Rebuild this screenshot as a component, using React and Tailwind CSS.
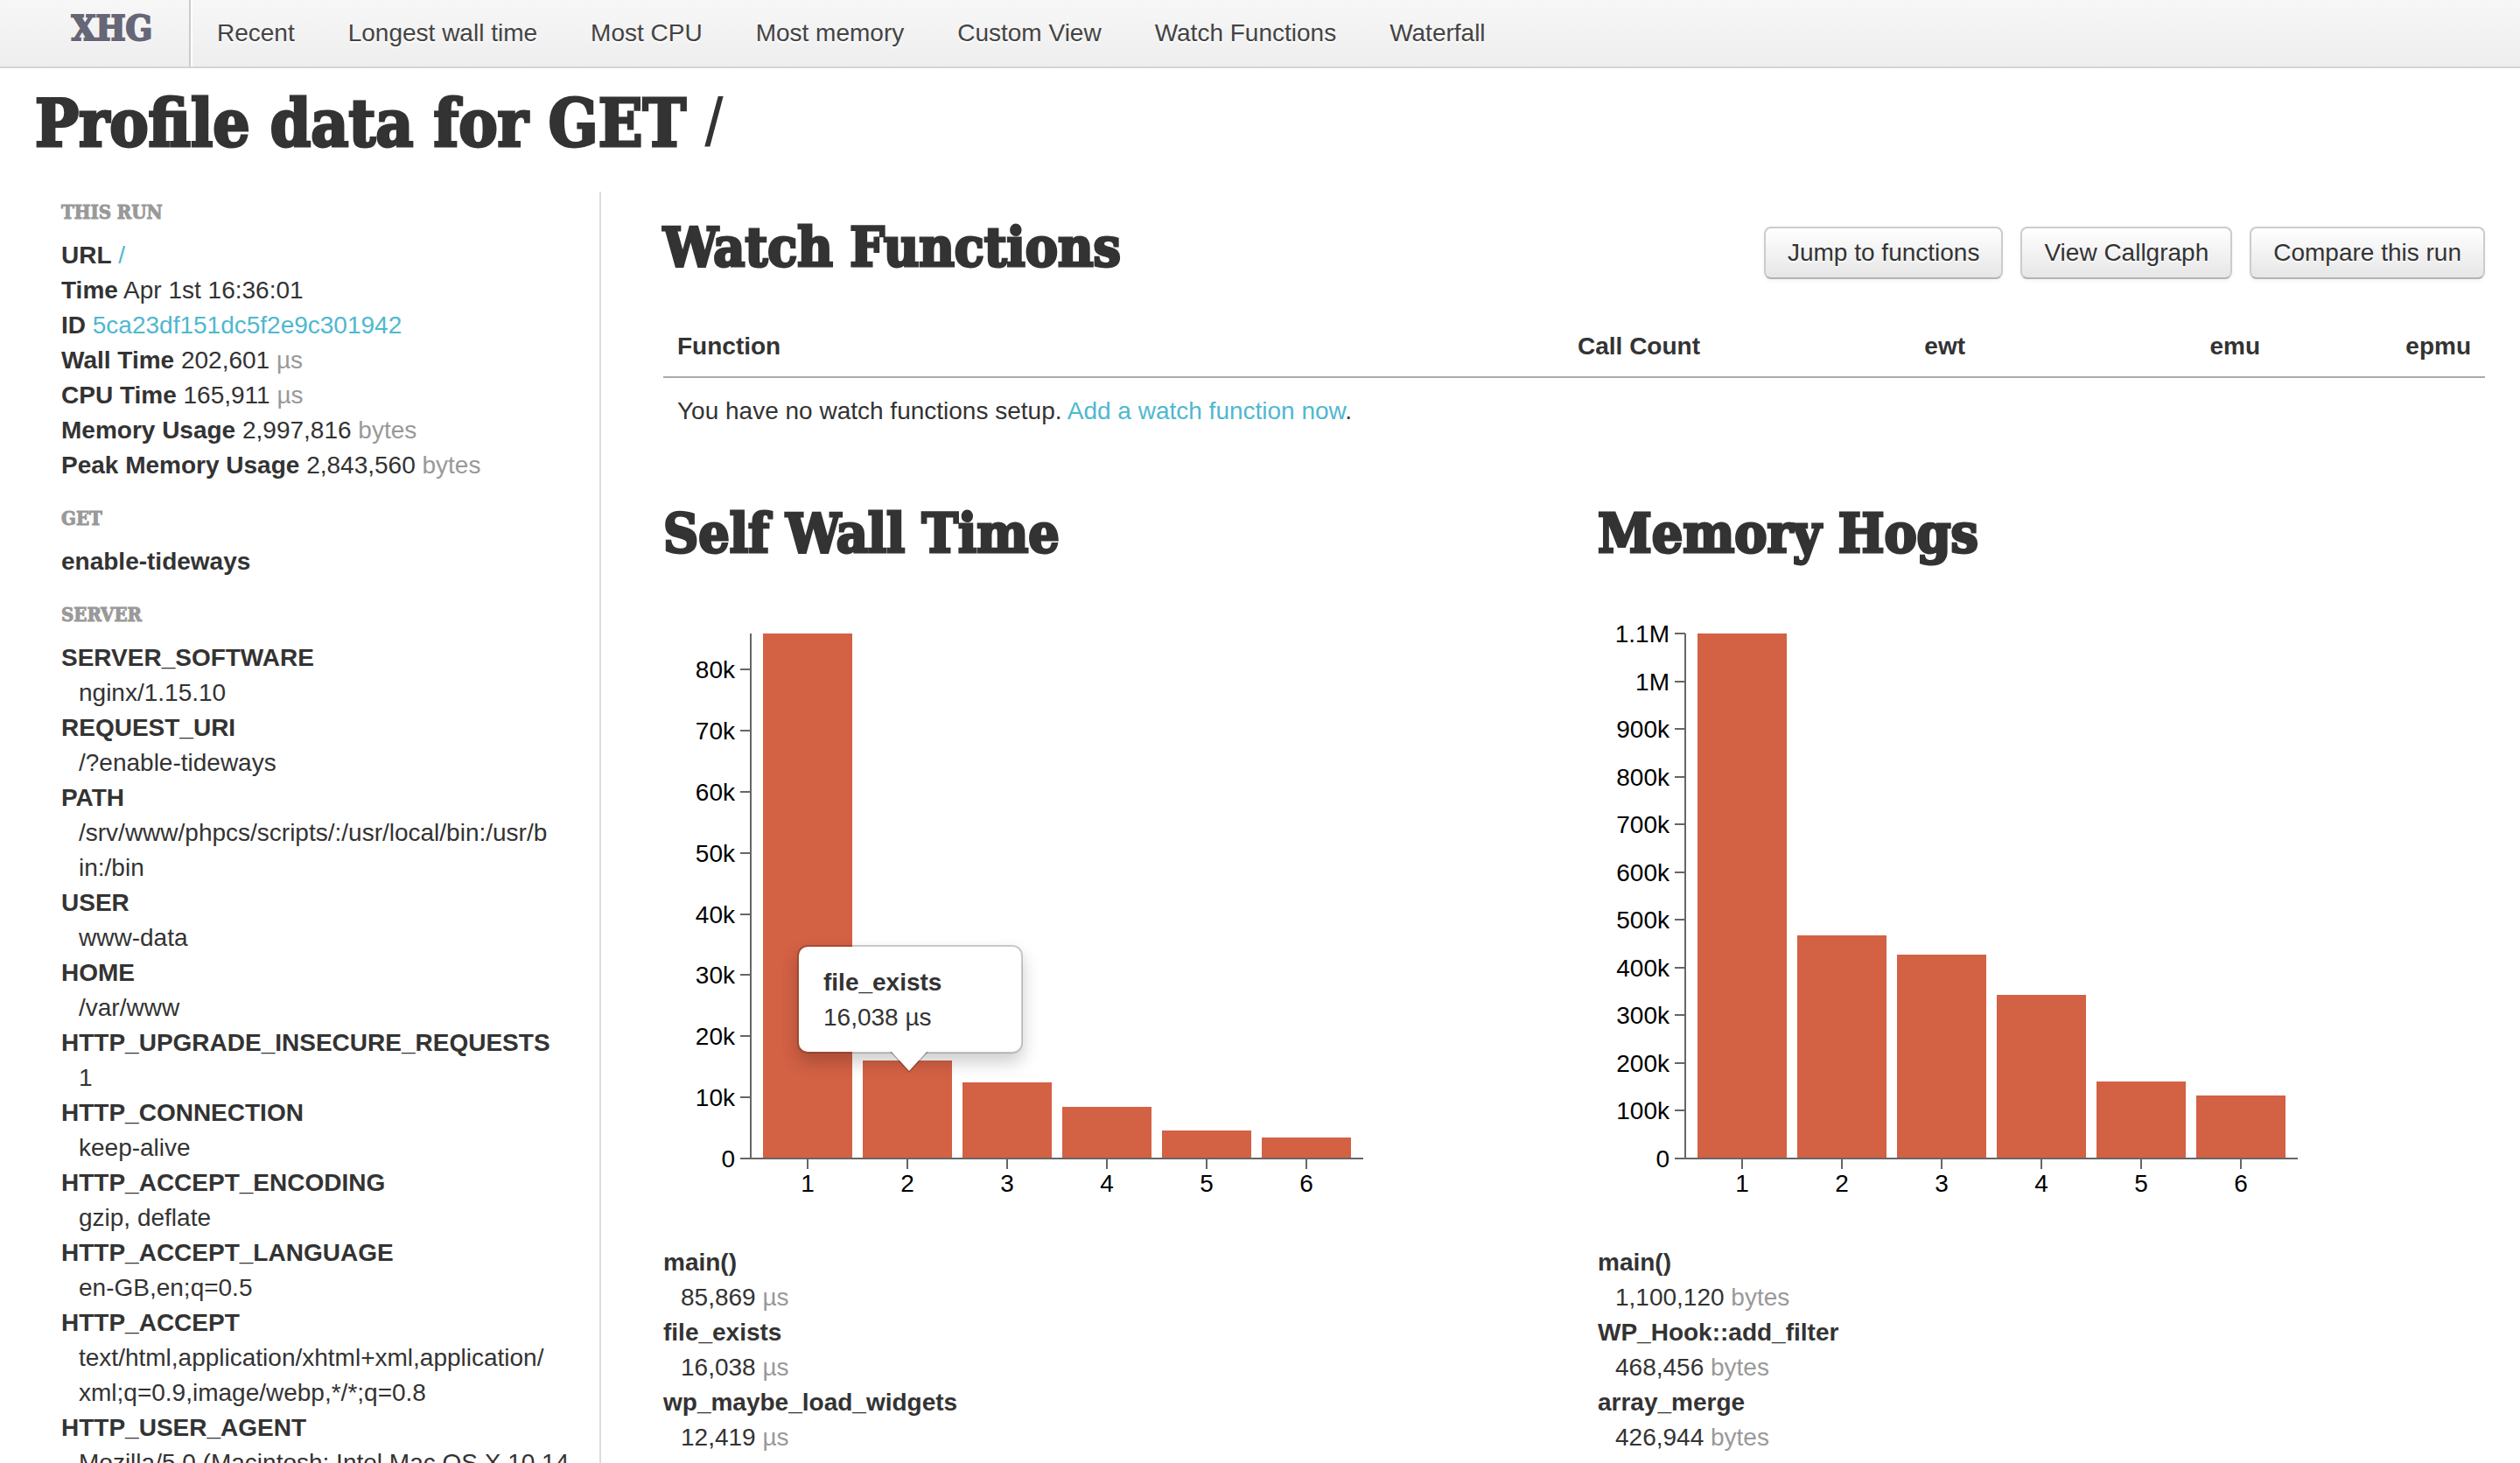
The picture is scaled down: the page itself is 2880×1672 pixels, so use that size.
const SLAB = "font-['DejaVu_Serif_Condensed','DejaVu_Serif',serif] font-bold";

const NAV = [
  'Recent',
  'Longest wall time',
  'Most CPU',
  'Most memory',
  'Custom View',
  'Watch Functions',
  'Waterfall',
];

const SERVER = [
  ['SERVER_SOFTWARE', 'nginx/1.15.10'],
  ['REQUEST_URI', '/?enable-tideways'],
  ['PATH', '/srv/www/phpcs/scripts/:/usr/local/bin:/usr/b\nin:/bin'],
  ['USER', 'www-data'],
  ['HOME', '/var/www'],
  ['HTTP_UPGRADE_INSECURE_REQUESTS', '1'],
  ['HTTP_CONNECTION', 'keep-alive'],
  ['HTTP_ACCEPT_ENCODING', 'gzip, deflate'],
  ['HTTP_ACCEPT_LANGUAGE', 'en-GB,en;q=0.5'],
  ['HTTP_ACCEPT', 'text/html,application/xhtml+xml,application/\nxml;q=0.9,image/webp,*/*;q=0.8'],
  ['HTTP_USER_AGENT', 'Mozilla/5.0 (Macintosh; Intel Mac OS X 10.14'],
];

const WALL_TIME = {
  title: 'Self Wall Time',
  unit: 'µs',
  max: 85869,
  step: 10000,
  values: [85869, 16038, 12419, 8500, 4650, 3400],
  items: [
    ['main()', '85,869'],
    ['file_exists', '16,038'],
    ['wp_maybe_load_widgets', '12,419'],
  ],
};

const MEMORY = {
  title: 'Memory Hogs',
  unit: 'bytes',
  max: 1100120,
  step: 100000,
  values: [1100120, 468456, 426944, 343500, 161500, 132500],
  items: [
    ['main()', '1,100,120'],
    ['WP_Hook::add_filter', '468,456'],
    ['array_merge', '426,944'],
  ],
};

function tickLabel(value) {
  if (value === 0) return '0';
  if (value >= 1000000) return `${value / 1000000}M`;
  return `${value / 1000}k`;
}

function BarChart({ data, tooltip }) {
  const plot = 600;
  const scale = (v) => Math.round((v / data.max) * plot);
  const ticks = [];
  for (let v = 0; v <= data.max; v += data.step) ticks.push(v);
  return (
    <div className="relative mt-8 w-[820px]">
      <svg width="820" height="720" className="block" role="img" aria-label={data.title}>
        <g transform="translate(100 42)">
          {data.values.map((v, i) => (
            <rect key={i} x={14 + i * 114} y={plot - scale(v)} width="102" height={scale(v)} fill="#d36144" />
          ))}
          <g stroke="#666" strokeWidth="2">
            <path d={`M0 0V${plot}M-1 ${plot}H700`} fill="none" />
            {ticks.map((v) => (
              <path key={v} d={`M-12 ${plot - scale(v)}H0`} />
            ))}
            {data.values.map((_, i) => (
              <path key={i} d={`M${65 + i * 114} ${plot}v12`} />
            ))}
          </g>
          <g fill="#000" fontSize="28">
            {ticks.map((v) => (
              <text key={v} x="-18" y={plot - scale(v) + 10} textAnchor="end">
                {tickLabel(v)}
              </text>
            ))}
            {data.values.map((_, i) => (
              <text key={i} x={65 + i * 114} y={plot + 38} textAnchor="middle">
                {i + 1}
              </text>
            ))}
          </g>
        </g>
      </svg>
      {tooltip}
    </div>
  );
}

function Tooltip({ name, value }) {
  return (
    <div
      role="tooltip"
      className="absolute top-[398px] left-[153px] w-[258px] rounded-xl border-2 border-black/20 bg-white bg-clip-padding px-7 pt-[21px] pb-[19px] shadow-[0_10px_20px_rgba(0,0,0,0.2)]"
    >
      <strong className="block">{name}</strong>
      {value}
      <svg width="44" height="24" className="absolute top-full left-[104px]" aria-hidden="true">
        <path d="M0 0L22 24L44 0" fill="rgba(0,0,0,0.25)" />
        <path d="M2 0L22 22L42 0Z" fill="#fff" />
      </svg>
    </div>
  );
}

function Unit({ children }) {
  return <span className="text-[#999]">{children}</span>;
}

function SectionTitle({ children }) {
  return (
    <h2 className={`${SLAB} text-[62px] leading-20 [-webkit-text-stroke:3px_currentColor]`}>{children}</h2>
  );
}

function ChartPanel({ data, tooltip }) {
  return (
    <section>
      <SectionTitle>{data.title}</SectionTitle>
      <BarChart data={data} tooltip={tooltip} />
      <dl className="mt-[21px]">
        {data.items.map(([name, value]) => (
          <div key={name}>
            <dt className="font-bold">{name}</dt>
            <dd className="ml-5">
              {value} <Unit>{data.unit}</Unit>
            </dd>
          </div>
        ))}
      </dl>
    </section>
  );
}

function SideHeading({ children }) {
  return (
    <h3
      className={`${SLAB} h-[50px] text-[22px] leading-10 text-[#999] uppercase [-webkit-text-stroke:1px_currentColor]`}
    >
      {children}
    </h3>
  );
}

function Fact({ label, children }) {
  return (
    <li>
      <strong>{label}</strong> {children}
    </li>
  );
}

export default function App() {
  return (
    <div className="h-screen overflow-hidden bg-white font-['Liberation_Sans',Arial,sans-serif] text-[28px] leading-10 text-[#333]">
      <nav className="flex h-[78px] border-b-2 border-[#d4d4d4] bg-linear-to-b from-[#f7f7f7] to-[#eee] pl-10 text-[#444] [text-shadow:0_2px_0_#fff]">
        <a
          href="#"
          className={`${SLAB} flex w-[178px] justify-center border-r-2 border-[#ccc] pt-3 text-[40px] text-[#667] shadow-[2px_0_0_#fff] [-webkit-text-stroke:2px_currentColor]`}
        >
          XHG
        </a>
        <ul className="flex gap-px">
          {NAV.map((item) => (
            <li key={item}>
              <a href="#" className="block px-[30px] pt-[18px]">
                {item}
              </a>
            </li>
          ))}
        </ul>
      </nav>

      <h1 className="mt-[22px] px-10 text-[77px] leading-20">
        <span className={`${SLAB} text-[74px] [-webkit-text-stroke:3px_currentColor]`}>Profile data for GET</span> /
      </h1>

      <div className="mt-[38px] flex gap-[71px] px-10">
        <aside className="w-[647px] shrink-0 border-r-2 border-[#ddd] px-[30px] pt-[3px]">
          <SideHeading>This run</SideHeading>
          <ul>
            <Fact label="URL">
              <a href="#" className="text-[#4fb8d0]">/</a>
            </Fact>
            <Fact label="Time">Apr 1st 16:36:01</Fact>
            <Fact label="ID">
              <a href="#" className="text-[#4fb8d0]">5ca23df151dc5f2e9c301942</a>
            </Fact>
            <Fact label="Wall Time">202,601 <Unit>µs</Unit></Fact>
            <Fact label="CPU Time">165,911 <Unit>µs</Unit></Fact>
            <Fact label="Memory Usage">2,997,816 <Unit>bytes</Unit></Fact>
            <Fact label="Peak Memory Usage">2,843,560 <Unit>bytes</Unit></Fact>
          </ul>
          <div className="mt-5">
            <SideHeading>Get</SideHeading>
            <strong className="block">enable-tideways</strong>
          </div>
          <div className="mt-5">
            <SideHeading>Server</SideHeading>
            <dl>
              {SERVER.map(([name, value]) => (
                <div key={name}>
                  <dt className="font-bold">{name}</dt>
                  <dd className="-mr-5 ml-5 break-words whitespace-pre-line">{value}</dd>
                </div>
              ))}
            </dl>
          </div>
        </aside>

        <main className="min-w-0 grow">
          <div className="flex items-start justify-between pt-10">
            <div className="-mt-4">
              <SectionTitle>Watch Functions</SectionTitle>
            </div>
            <div className="flex gap-5">
              {['Jump to functions', 'View Callgraph', 'Compare this run'].map((label) => (
                <button
                  key={label}
                  type="button"
                  className="h-[60px] rounded-lg border-2 border-[#ccc] border-b-[#b3b3b3] bg-linear-to-b from-white to-[#e6e6e6] px-[25px] leading-10 shadow-[0_2px_4px_rgba(0,0,0,0.05)] [text-shadow:0_2px_2px_rgba(255,255,255,0.75)]"
                >
                  {label}
                </button>
              ))}
            </div>
          </div>

          <table className="mt-[37px] w-full table-fixed">
            <colgroup>
              <col />
              <col className="w-[240px]" />
              <col className="w-[303px]" />
              <col className="w-[337px]" />
              <col className="w-[241px]" />
            </colgroup>
            <thead>
              <tr className="border-b-2 border-[#aaa] text-right">
                <th className="px-4 pt-4 pb-3.5 text-left">Function</th>
                <th className="px-4 pt-4 pb-3.5">Call Count</th>
                <th className="px-4 pt-4 pb-3.5">ewt</th>
                <th className="px-4 pt-4 pb-3.5">emu</th>
                <th className="px-4 pt-4 pb-3.5">epmu</th>
              </tr>
            </thead>
            <tbody>
              <tr>
                <td colSpan={5} className="px-4 pt-[18px] pb-4">
                  You have no watch functions setup.{' '}
                  <a href="#" className="text-[#4fb8d0]">Add a watch function now</a>.
                </td>
              </tr>
            </tbody>
          </table>

          <div className="mt-16 grid grid-cols-2 gap-[54px]">
            <ChartPanel data={WALL_TIME} tooltip={<Tooltip name="file_exists" value="16,038 µs" />} />
            <ChartPanel data={MEMORY} />
          </div>
        </main>
      </div>
    </div>
  );
}
